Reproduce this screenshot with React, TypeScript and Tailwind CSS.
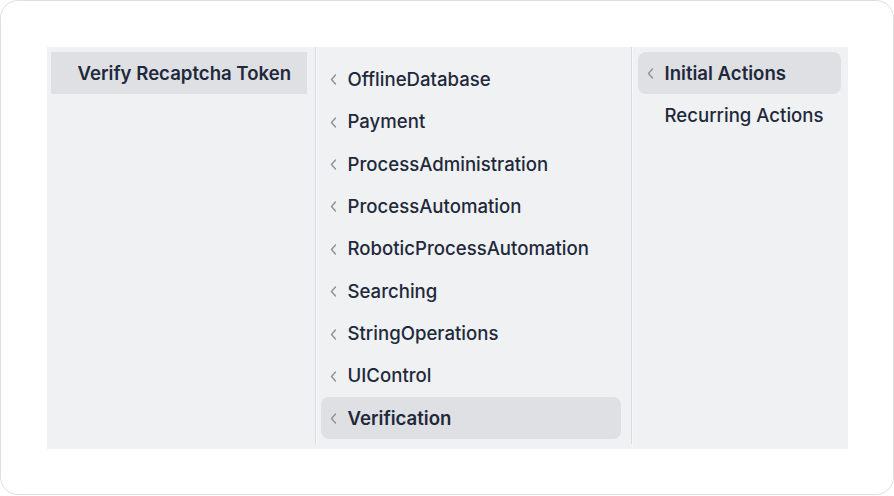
import React from 'react'

const modules = [
  'OfflineDatabase',
  'Payment',
  'ProcessAdministration',
  'ProcessAutomation',
  'RoboticProcessAutomation',
  'Searching',
  'StringOperations',
  'UIControl',
  'Verification',
]

function Chevron() {
  return (
    <svg width="7" height="11" viewBox="0 0 7 11" fill="none" className="shrink-0">
      <polyline points="5.5,1 1.5,5.5 5.5,10" stroke="#8b9099" strokeWidth="1.4" strokeLinecap="round" strokeLinejoin="round" />
    </svg>
  )
}

function Item({ label, active, chevron, rounded }: { label: string; active?: boolean; chevron?: boolean; rounded?: boolean }) {
  return (
    <div
      className={
        'flex items-center h-[42.4px] pl-[9px] ' +
        (active ? 'bg-[#dfe0e4] font-semibold ' : 'font-medium ') +
        (rounded ? 'rounded-lg' : '')
      }
    >
      <div className="w-[7px] flex items-center pt-[2px]">{chevron && <Chevron />}</div>
      <span className="ml-[11px] pt-[2px] whitespace-nowrap">{label}</span>
    </div>
  )
}

export default function App() {
  return (
    <div className="w-[894px] h-[496px] bg-white" style={{ fontFamily: 'Inter, "Noto Sans", sans-serif' }}>
      <div className="h-[495px] border-[1.5px] border-[#dcdfe3] rounded-[18px] pt-[45.5px] px-[45.5px]">
        <div className="flex h-[402px] bg-[#f0f1f3] text-[18.6px] text-[#1e293b]">
          <div className="w-[268px] pt-[5px] pl-[4px] pr-[8px]">
            <Item label="Verify Recaptcha Token" active />
          </div>
          <div className="w-px bg-[#dbdcdf] mb-[5px]" />
          <div className="w-[315px] pt-[11px] pl-[4px] pr-[10px] border-l border-[#f7f8f9] mb-[5px]">
            {modules.map((m) => (
              <Item key={m} label={m} chevron active={m === 'Verification'} rounded />
            ))}
          </div>
          <div className="w-px bg-[#dbdcdf] mb-[5px]" />
          <div className="flex-1 pt-[5px] pl-[5px] pr-[7px] border-l border-[#f7f8f9]">
            <Item label="Initial Actions" chevron active rounded />
            <Item label="Recurring Actions" />
          </div>
        </div>
      </div>
    </div>
  )
}
